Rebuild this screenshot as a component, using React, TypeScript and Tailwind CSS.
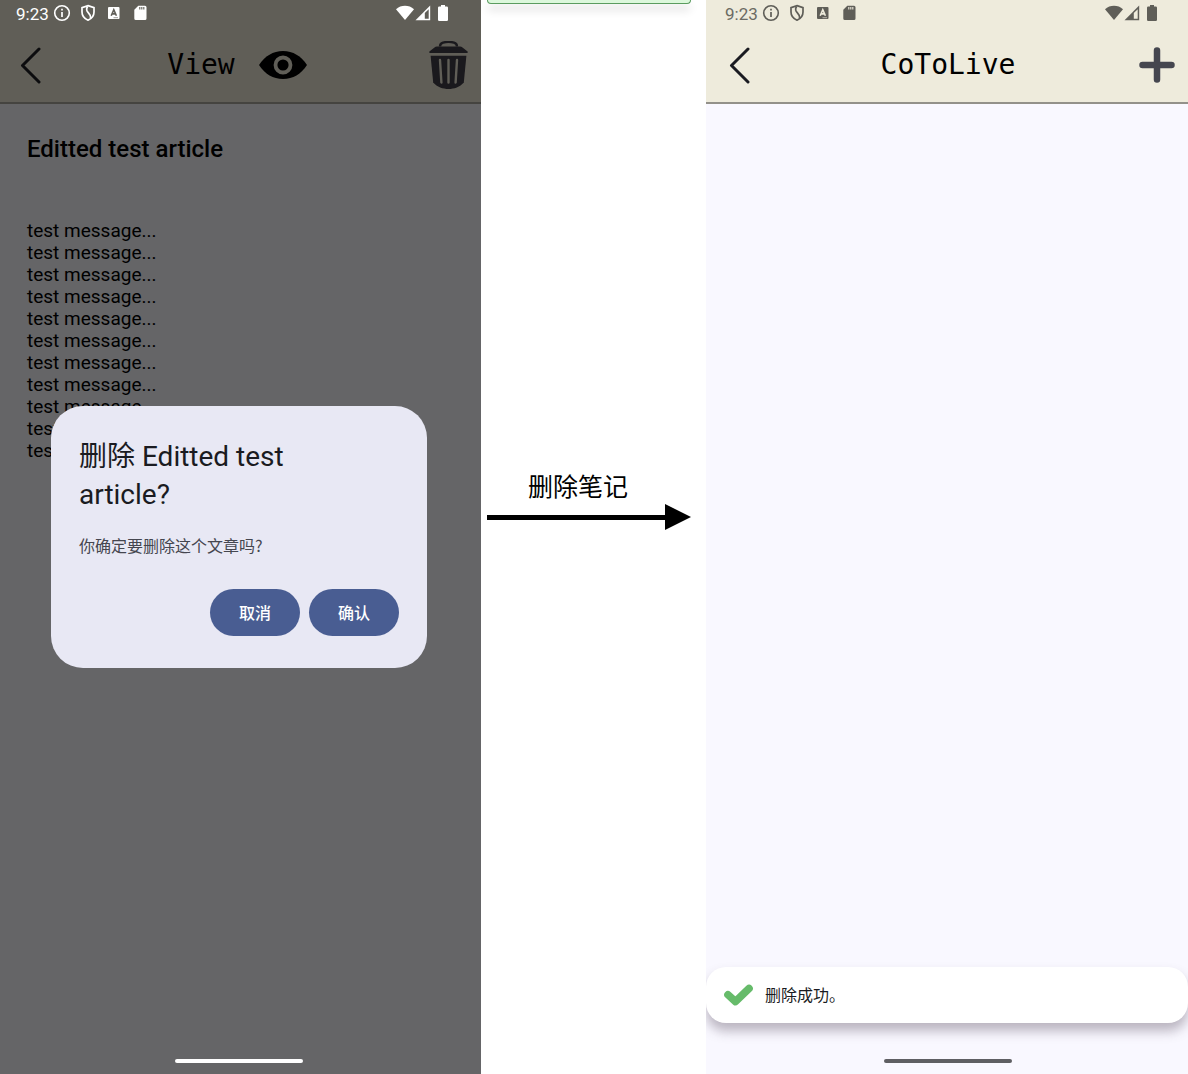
import type { ReactNode } from "react";

function StatusBar({ ink, hole, className }: { ink: string; hole: string; className: string }) {
  return (
    <div className={`flex h-[26px] items-center justify-between ${className}`}>
      <div className="flex items-center">
        <span className="w-[37px] pt-px text-[17px] leading-6">9:23</span>
        <svg width="18" height="18" viewBox="0 0 18 18" fill="none" stroke={ink} aria-hidden="true">
          <circle cx="9" cy="9" r="7.3" strokeWidth="1.6" />
          <path d="M9 8v5M9 4.8v1.6" strokeWidth="1.7" />
        </svg>
        <svg className="ml-2" width="18" height="18" viewBox="0 0 18 18" fill="none" stroke={ink} strokeWidth="1.7" aria-hidden="true">
          <path d="M9 1.6 15 3.6V8c0 4-2.6 6.8-6 8.2C5.6 14.8 3 12 3 8V3.6Z" />
          <path d="M8.500 2.500C5 9 12.500 8 11.500 14" strokeWidth="1.8" />
        </svg>
        <svg className="ml-[11px]" width="12" height="14" viewBox="0 0 12 14" aria-hidden="true">
          <rect x="0" y="1" width="11.5" height="12" rx="1" fill={ink} />
          <path d="M3.2 9.8 5.8 3.8 8.4 9.8M4.2 7.9h3.2" fill="none" stroke={hole} strokeWidth="1.6" />
          <path d="M5.5 11.7h4.5" stroke={hole} strokeWidth=".6" />
        </svg>
        <svg className="ml-[14px]" width="13" height="16" viewBox="0 0 13 16" aria-hidden="true">
          <path d="M4.3.8H11a1.5 1.5 0 0 1 1.5 1.5V13.5A1.5 1.5 0 0 1 11 15H1.8A1.5 1.5 0 0 1 .3 13.5V4.8Z" fill={ink} />
          <path d="M5 3.3H11" stroke={hole} strokeWidth="2.6" strokeDasharray="1.4 .5" opacity=".75" />
        </svg>
      </div>
      <div className="flex items-center">
        <svg width="18" height="16" viewBox="0 0 18 16" aria-hidden="true">
          <path d="M0 4.2C5-.4 13-.4 18 4.2L9 15Z" fill={ink} />
        </svg>
        <svg className="ml-px" width="16" height="16" viewBox="0 0 16 16" aria-hidden="true">
          <path d="M.5 15.3 15.2.6V15.3Z" fill={ink} />
          <path d="M9.8 8 13.7 4.2V13.8H9.8Z" fill={hole} />
        </svg>
        <svg className="ml-[7px]" width="10" height="16" viewBox="0 0 10 16" aria-hidden="true">
          <path d="M3 0h4v1.6h1.8A1.2 1.2 0 0 1 10 2.8V14.8A1.2 1.2 0 0 1 8.8 16H1.2A1.2 1.2 0 0 1 0 14.8V2.8A1.2 1.2 0 0 1 1.2 1.6H3Z" fill={ink} />
        </svg>
      </div>
    </div>
  );
}

function TitleRow({ title, action, className }: { title: ReactNode; action: ReactNode; className: string }) {
  return (
    <div className={`grid h-[76px] grid-cols-[1fr_auto_1fr] items-center pt-0.5 ${className}`}>
      <button type="button" aria-label="Back" className="justify-self-start">
        <svg width="22" height="38" viewBox="0 0 22 38" fill="none" stroke="currentColor" strokeWidth="3" strokeLinecap="round" strokeLinejoin="round">
          <path d="M19 3 2.5 19.5 19 36" />
        </svg>
      </button>
      {title}
      {action}
    </div>
  );
}

function EyeIcon() {
  return (
    <svg width="48" height="30" viewBox="0 0 48 30" aria-hidden="true">
      <path d="M0 15C6 6 14 1 24 1s18 5 24 14c-6 9-14 14-24 14S6 24 0 15Z" fill="#000" />
      <circle cx="24" cy="15" r="7.5" fill="#000" stroke="#605e57" strokeWidth="3.8" />
    </svg>
  );
}

function TrashIcon() {
  return (
    <svg width="39" height="48" viewBox="0 0 39 48" fill="#1a191d" aria-hidden="true">
      <path d="M11 5.5C11 3 12 2.3 14 1.7c3-.9 8-.9 11 0 2 .6 3 1.3 3 3.8" fill="none" stroke="#1a191d" strokeWidth="2.4" />
      <path d="M8 5.500h23q1.500 0 2.500 1L38.600 10.500c.5 1 .2 1.600-.8 1.600H1.200c-1 0-1.300-.6-.8-1.600L5.500 6.500q1-1 2.500-1Z" />
      <path d="M1.6 14.8H37.4L34.8 41.5C31 46 25 48 19.5 48S8 46 4.2 41.5Z" />
      <path d="M11 19 12.4 41.5M19.5 19V41.5M28 19 26.6 41.5" stroke="#605e57" strokeWidth="2.4" strokeLinecap="round" />
    </svg>
  );
}

function Dialog() {
  return (
    <div className="absolute inset-0 flex items-center justify-center pr-[3px]">
      <section role="dialog" aria-labelledby="dialog-title" className="w-[376px] rounded-[32px] bg-[#e8e8f4] px-7 py-8">
        <h2 id="dialog-title" className="max-w-[260px] text-[28px] leading-[38px] text-[#1a1b21]">
          删除 Editted test article?
        </h2>
        <p className="mt-[19px] font-['Noto_Sans_CJK_SC',sans-serif] text-base leading-6 text-[#45464f]">你确定要删除这个文章吗?</p>
        <div className="mt-8 flex justify-end gap-[9px]">
          <button type="button" className="h-[47px] w-[90px] rounded-full bg-[#495d92] pt-0.5 text-base font-medium text-white">取消</button>
          <button type="button" className="h-[47px] w-[90px] rounded-full bg-[#495d92] pt-0.5 text-base font-medium text-white">确认</button>
        </div>
      </section>
    </div>
  );
}

const messages = Array.from({ length: 11 }, () => "test message...");

export default function App() {
  return (
    <div className="grid min-h-screen grid-cols-[481fr_225fr_482fr] bg-white font-['Roboto','Noto_Sans_CJK_SC',sans-serif]">
      <section className="relative flex flex-col bg-[#656567]">
        <header className="border-b-2 border-[#454440] bg-[#605e57]">
          <StatusBar ink="#ffffff" hole="#605e57" className="pr-[33px] pl-4 text-white" />
          <TitleRow
            className="pr-[13px] pl-5 text-[#0c0c0e]"
            title={
              <div className="flex items-center gap-6 pr-[14px]">
                <h1 className="font-['DejaVu_Sans_Mono',monospace] text-[28px] leading-9 text-black">View</h1>
                <EyeIcon />
              </div>
            }
            action={
              <button type="button" aria-label="Delete" className="justify-self-end">
                <TrashIcon />
              </button>
            }
          />
        </header>
        <main className="flex-1 px-[27px] pt-[29px] text-black">
          <h2 className="text-2xl font-medium">Editted test article</h2>
          <ul className="mt-[55px] text-[19px] leading-[22px]">
            {messages.map((message, i) => (
              <li key={i}>{message}</li>
            ))}
          </ul>
        </main>
        <footer className="flex justify-center pr-[3px] pb-[11px]">
          <div className="h-1 w-32 rounded-full bg-white" />
        </footer>
        <Dialog />
      </section>

      <section className="flex flex-col pr-[15px] pl-[6px]">
        <div className="h-1 rounded-b-md border border-t-0 border-[#5a9c5f] bg-[#dcf8dc] shadow-[0_6px_8px_rgba(0,0,0,0.15)]" />
        <div className="mt-[468px] flex flex-col">
          <p className="pr-[22px] text-center text-[25px] leading-8 text-black">删除笔记</p>
          <div className="flex items-center">
            <div className="h-[5px] flex-1 bg-black" />
            <svg width="26" height="26" viewBox="0 0 26 26" aria-hidden="true">
              <path d="M0 0 26 13 0 26Z" />
            </svg>
          </div>
        </div>
      </section>

      <section className="flex flex-col overflow-hidden bg-[#f9f8ff]">
        <header className="border-b-2 border-[#93918a] bg-[#eeebdc]">
          <StatusBar ink="#5f5e58" hole="#eeebdc" className="pr-[31px] pl-[19px] text-[#6b6a63]" />
          <TitleRow
            className="pr-[13px] pl-[23px] text-[#1a1b21]"
            title={<h1 className="pr-2 font-['DejaVu_Sans_Mono',monospace] text-[28px] leading-9 text-black">CoToLive</h1>}
            action={
              <button type="button" aria-label="Add" className="justify-self-end">
                <svg width="36" height="36" viewBox="0 0 36 36" stroke="#45464f" strokeWidth="6.5" strokeLinecap="round">
                  <path d="M18 3.5V32.5M3.5 18H32.5" />
                </svg>
              </button>
            }
          />
        </header>
        <main className="flex-1" />
        <div role="status" className="flex h-14 items-center gap-3 rounded-[20px] bg-white pl-[18px] text-base text-[#1a1b21] shadow-[0_8px_12px_rgba(70,55,75,0.35)]">
          <svg width="29" height="23" viewBox="0 0 29 23" fill="none" stroke="#66bb6a" strokeWidth="7.6" strokeLinecap="round" strokeLinejoin="round" aria-hidden="true">
            <path d="M4 10.8 11.5 17.6 25 4.5" />
          </svg>
          <p className="pt-0.5">删除成功。</p>
        </div>
        <footer className="flex justify-center pt-9 pb-[11px] pl-0.5">
          <div className="h-1 w-32 rounded-full bg-[#5f5f63]" />
        </footer>
      </section>
    </div>
  );
}
